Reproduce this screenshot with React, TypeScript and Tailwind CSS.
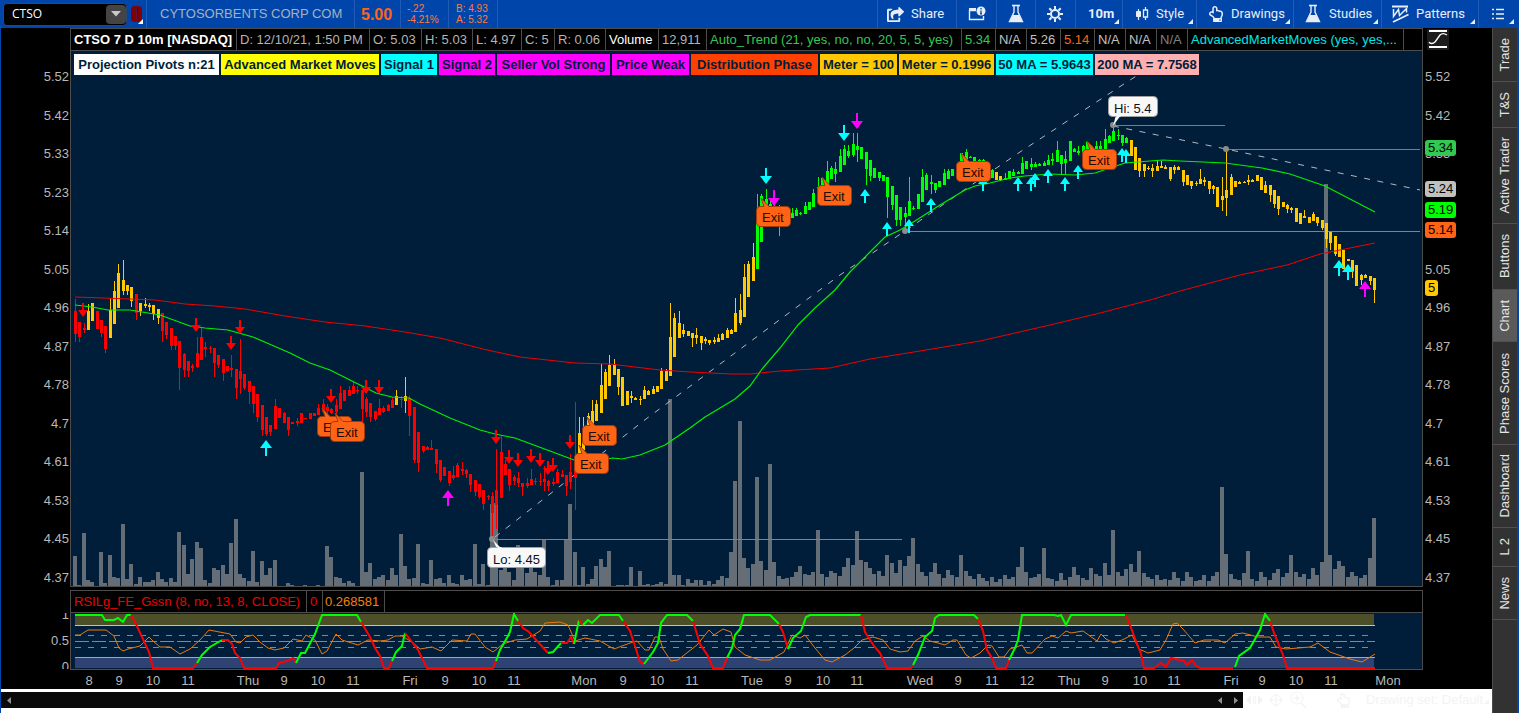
import React from "react";
import { FaRegHandPointUp, FaShareSquare } from "react-icons/fa";

const UP = "#00ff00";
const DOWN = "#ff0000";
const NEUTRAL = "#ffc800";
const CYAN = "#00ffff";
const MAGENTA = "#ff00ff";

const FIRST_X = 75;
const BAR_STEP = 4.344;
const VOLUME_BASE = 586;

// high, body top, body bottom, low
const CANDLES: number[][] = [
  [299, 311, 334, 342], [322, 322, 337, 342], [323, 328, 330, 333], [304, 311, 330, 330], [303, 303, 321, 321],
  [311, 311, 329, 329], [320, 320, 333, 337], [326, 326, 349, 353], [298, 310, 338, 338], [281, 291, 324, 324],
  [264, 273, 308, 308], [260, 280, 291, 295], [285, 285, 291, 295], [287, 287, 301, 307], [294, 294, 313, 320],
  [303, 303, 311, 316], [298, 304, 306, 308], [303, 305, 307, 311], [305, 305, 314, 320], [309, 309, 318, 324],
  [313, 313, 331, 342], [322, 322, 335, 339], [328, 328, 346, 350], [336, 336, 346, 350], [341, 341, 368, 390],
  [353, 354, 370, 377], [361, 361, 371, 377], [364, 366, 368, 372], [337, 353, 367, 368], [328, 337, 360, 360],
  [342, 347, 349, 357], [346, 348, 349, 353], [348, 348, 363, 377], [355, 355, 365, 368], [359, 359, 373, 381],
  [366, 366, 371, 372], [355, 368, 370, 377], [369, 369, 388, 399], [339, 371, 379, 394], [374, 374, 388, 390],
  [381, 381, 392, 404], [386, 386, 404, 413], [394, 394, 417, 422], [405, 405, 430, 436], [417, 417, 434, 436],
  [425, 425, 432, 436], [399, 406, 429, 429], [408, 408, 418, 418], [412, 413, 423, 423], [417, 417, 430, 436],
  [422, 422, 424, 424], [418, 421, 423, 426], [413, 413, 423, 423], [418, 418, 419, 419], [413, 413, 419, 419],
  [413, 413, 416, 416], [404, 408, 415, 415], [399, 404, 412, 412], [404, 407, 411, 415], [408, 409, 413, 414],
  [399, 405, 412, 415], [386, 393, 409, 409], [390, 390, 401, 401], [386, 390, 396, 396], [381, 386, 394, 394],
  [386, 390, 391, 394], [390, 390, 409, 422], [397, 399, 412, 417], [403, 403, 417, 422], [411, 411, 419, 421],
  [399, 408, 415, 415], [406, 408, 412, 413], [404, 405, 411, 411], [397, 400, 408, 408], [390, 396, 405, 405],
  [396, 399, 400, 408], [377, 396, 401, 413], [396, 398, 416, 436], [407, 407, 460, 463], [432, 432, 463, 472],
  [446, 446, 451, 453], [446, 447, 450, 450], [440, 448, 450, 450], [449, 449, 464, 473], [460, 460, 480, 482],
  [467, 467, 476, 476], [471, 471, 483, 486], [466, 475, 478, 480], [463, 465, 477, 477], [462, 469, 471, 475],
  [469, 470, 474, 478], [474, 474, 485, 492], [480, 480, 492, 496], [484, 484, 497, 499], [490, 490, 504, 510],
  [495, 496, 497, 500], [492, 496, 513, 537], [449, 490, 505, 529], [436, 452, 498, 498], [460, 464, 475, 475],
  [469, 469, 485, 491], [475, 477, 481, 485], [472, 478, 483, 487], [483, 483, 487, 496], [478, 483, 486, 488],
  [469, 479, 485, 485], [478, 481, 482, 485], [473, 481, 482, 486], [466, 479, 482, 491], [480, 481, 486, 491],
  [478, 482, 484, 486], [469, 472, 483, 483], [470, 474, 477, 477], [475, 475, 486, 496], [454, 472, 482, 489],
  [402, 466, 478, 510], [417, 433, 453, 455], [417, 440, 450, 453], [413, 416, 430, 430], [400, 411, 425, 425],
  [400, 404, 421, 421], [364, 385, 413, 413], [369, 372, 399, 399], [355, 365, 386, 386], [359, 364, 375, 375],
  [369, 369, 387, 395], [377, 377, 406, 406], [391, 391, 405, 405], [391, 396, 398, 403], [397, 398, 400, 400],
  [396, 399, 400, 405], [386, 390, 399, 399], [390, 391, 395, 395], [386, 389, 394, 394], [386, 386, 392, 392],
  [368, 371, 389, 389], [369, 371, 381, 381], [303, 337, 376, 376], [313, 318, 357, 357], [311, 323, 338, 338],
  [324, 330, 334, 337], [331, 331, 336, 336], [333, 333, 338, 347], [328, 335, 338, 344], [336, 336, 343, 350],
  [337, 339, 341, 344], [340, 340, 343, 345], [337, 340, 342, 344], [334, 338, 342, 342], [333, 334, 340, 340],
  [328, 330, 338, 338], [329, 330, 334, 334], [298, 313, 332, 332], [294, 310, 323, 325], [264, 277, 317, 317],
  [261, 264, 297, 297], [243, 257, 281, 281], [194, 210, 269, 269], [194, 196, 242, 242], [189, 199, 210, 210],
  [200, 204, 212, 212], [205, 208, 215, 215], [205, 212, 227, 236], [210, 212, 220, 220], [208, 211, 217, 217],
  [208, 213, 218, 218], [208, 210, 216, 216], [212, 213, 214, 215], [202, 206, 214, 214], [202, 202, 210, 210],
  [189, 193, 207, 207], [177, 187, 200, 200], [177, 178, 190, 190], [161, 171, 185, 185], [166, 168, 179, 179],
  [162, 169, 174, 182], [149, 156, 172, 172], [145, 149, 165, 165], [145, 151, 156, 158], [133, 144, 155, 157],
  [133, 146, 150, 162], [147, 147, 159, 159], [152, 152, 169, 185], [160, 160, 176, 181], [168, 168, 178, 178],
  [172, 172, 178, 181], [175, 175, 181, 181], [177, 177, 197, 218], [186, 186, 205, 210], [195, 195, 220, 226],
  [207, 207, 220, 226], [207, 213, 217, 229], [177, 201, 216, 216], [206, 208, 209, 210], [194, 194, 209, 209],
  [169, 177, 202, 202], [173, 175, 190, 190], [175, 182, 184, 194], [183, 183, 190, 193], [181, 181, 187, 187],
  [169, 173, 185, 185], [169, 171, 179, 179], [169, 169, 176, 176], [163, 165, 171, 171], [153, 153, 165, 165],
  [149, 152, 163, 163], [156, 157, 158, 158], [157, 157, 163, 163], [159, 160, 165, 165], [159, 160, 162, 168],
  [165, 165, 173, 175], [169, 170, 178, 178], [172, 172, 180, 180], [176, 176, 180, 181], [173, 178, 180, 180],
  [171, 171, 179, 179], [169, 172, 176, 176], [171, 172, 174, 174], [157, 163, 174, 174], [161, 161, 169, 169],
  [158, 164, 167, 170], [162, 164, 167, 167], [163, 164, 166, 166], [161, 163, 166, 166], [155, 160, 165, 165],
  [153, 159, 161, 165], [141, 150, 162, 162], [155, 155, 164, 174], [151, 159, 163, 174], [141, 141, 161, 161],
  [148, 149, 152, 152], [146, 151, 153, 155], [145, 146, 160, 160], [141, 142, 149, 149], [145, 146, 150, 150],
  [141, 146, 150, 150], [141, 146, 150, 150], [129, 139, 149, 149], [135, 136, 143, 143], [125, 131, 141, 141],
  [129, 135, 136, 140], [135, 135, 143, 146], [137, 138, 143, 143], [140, 140, 156, 156], [147, 147, 170, 170],
  [158, 158, 171, 177], [164, 164, 171, 177], [166, 168, 169, 170], [164, 168, 171, 177], [160, 166, 171, 171],
  [161, 166, 168, 168], [165, 167, 169, 169], [167, 167, 179, 181], [165, 167, 170, 174], [166, 167, 170, 170],
  [170, 170, 182, 186], [175, 175, 185, 185], [181, 181, 186, 189], [181, 183, 184, 186], [169, 179, 184, 184],
  [177, 180, 182, 186], [181, 181, 189, 194], [185, 186, 189, 194], [187, 187, 207, 207], [177, 196, 200, 211],
  [151, 190, 198, 216], [174, 177, 195, 195], [181, 181, 187, 187], [181, 182, 184, 184], [181, 182, 183, 183],
  [175, 180, 182, 185], [179, 180, 182, 182], [175, 175, 181, 181], [177, 177, 190, 190], [181, 185, 193, 193],
  [185, 185, 195, 202], [190, 190, 204, 208], [196, 196, 209, 215], [202, 202, 207, 207], [204, 205, 209, 213],
  [207, 208, 210, 213], [208, 208, 222, 222], [213, 213, 224, 224], [210, 216, 218, 218], [217, 217, 223, 223],
  [212, 214, 221, 221], [217, 217, 223, 226], [220, 220, 228, 230], [223, 223, 239, 248], [232, 232, 243, 250],
  [236, 236, 254, 256], [244, 244, 257, 257], [250, 250, 269, 269], [259, 259, 261, 261], [260, 260, 271, 278],
  [265, 265, 286, 286], [274, 275, 280, 285], [274, 275, 278, 278], [276, 276, 281, 285], [278, 278, 290, 303],
];

// last bar index of each colour run
const COLOR_RUNS: [number, string][] = [
  [2, DOWN], [4, NEUTRAL], [7, DOWN], [13, NEUTRAL], [14, DOWN], [19, NEUTRAL], [73, DOWN], [74, NEUTRAL],
  [75, DOWN], [76, NEUTRAL], [115, DOWN], [156, NEUTRAL], [211, UP], [213, NEUTRAL], [242, UP], [299, NEUTRAL],
];

const VOLUME = [
  30, 1, 53, 6, 4, 0, 34, 3, 31, 9, 8, 62, 7, 22, 2, 9, 4, 4, 6, 14, 7, 4, 8, 4, 54, 41, 12, 27, 44, 38,
  6, 3, 18, 16, 21, 12, 43, 67, 12, 8, 5, 35, 4, 25, 11, 18, 26, 0, 0, 3, 1, 0, 0, 1, 0, 0, 1, 0, 40, 29,
  9, 8, 3, 5, 3, 0, 114, 14, 23, 7, 9, 11, 6, 18, 11, 52, 20, 7, 8, 42, 3, 2, 26, 7, 8, 3, 11, 3, 2, 11,
  6, 7, 42, 2, 22, 1, 82, 83, 16, 18, 14, 6, 41, 33, 13, 26, 14, 11, 47, 9, 1, 6, 6, 46, 82, 34, 1, 19, 2, 7,
  20, 27, 19, 35, 0, 1, 1, 1, 19, 0, 15, 1, 2, 1, 2, 4, 2, 187, 11, 11, 1, 7, 3, 6, 6, 1, 5, 2, 6, 10,
  8, 34, 105, 165, 28, 18, 22, 109, 25, 16, 122, 24, 10, 7, 8, 9, 14, 20, 12, 11, 14, 56, 12, 9, 15, 13, 10, 19, 28, 21,
  55, 26, 24, 18, 12, 15, 10, 31, 23, 13, 26, 20, 30, 48, 22, 14, 10, 14, 23, 12, 8, 16, 11, 9, 31, 15, 10, 7, 12, 8,
  5, 9, 4, 7, 11, 7, 9, 19, 39, 14, 8, 9, 12, 38, 8, 7, 5, 13, 6, 9, 19, 11, 8, 6, 18, 12, 10, 23, 11, 56,
  14, 10, 17, 22, 14, 35, 13, 9, 7, 11, 6, 7, 6, 14, 8, 5, 14, 9, 5, 6, 11, 5, 10, 14, 99, 32, 12, 7, 6, 13,
  35, 7, 5, 14, 9, 6, 13, 17, 9, 13, 31, 14, 9, 12, 7, 18, 11, 24, 402, 31, 17, 25, 20, 9, 14, 10, 8, 11, 28, 68,
];

const MA_200 =
  "75,297 130,299 155,300 185,304 215,306 245,309 285,316 325,322 365,326 405,332 440,338 487,350 520,357 575,363 610,364 660,370 690,372 732,374 750,374 780,371 830,368 870,359 920,351 980,341 1050,325 1100,313 1150,300 1180,291 1240,275 1287,265 1320,254 1345,249 1375,243";
const MA_50 =
  "75,305 92,307 108,310 130,310 160,315 190,326 205,328 228,330 253,337 290,353 310,363 330,370 350,380 376,393 392,397 409,398 420,404 450,418 480,430 495,434 515,438 550,451 574,460 600,460 613,458 622,459 640,455 665,445 690,428 705,417 735,399 750,386 762,369 780,348 798,325 815,308 835,290 850,272 870,252 885,237 900,230 915,221 940,205 965,190 975,186 990,183 1010,178 1025,176 1050,174 1075,175 1095,173 1110,168 1125,163 1150,161 1163,160 1180,161 1225,163 1262,168 1290,174 1325,186 1350,199 1375,212";

// x, tip y, colour, half width, height (negative height points down)
const ARROWS: [number, number, string, number, number][] = [
  [83, 317, DOWN, 4, -14], [196, 332, DOWN, 4, -14], [240, 334, DOWN, 4, -14], [231, 350, DOWN, 4, -14],
  [331, 403, DOWN, 4, -14], [366, 394, DOWN, 4, -14], [379, 394, DOWN, 4, -14], [496, 444, DOWN, 4, -14],
  [509, 464, DOWN, 4, -14], [518, 467, DOWN, 4, -14], [531, 463, DOWN, 4, -14], [540, 467, DOWN, 4, -14],
  [548, 475, DOWN, 4, -14], [553, 472, DOWN, 4, -14], [570, 449, DOWN, 4, -14],
  [266, 440, CYAN, 5, 16], [448, 490, MAGENTA, 5, 16], [766, 184, CYAN, 5, -16], [844, 141, CYAN, 5, -16],
  [774, 206, MAGENTA, 5, -16], [857, 129, MAGENTA, 5, -16], [865, 189, CYAN, 4, 14], [887, 222, CYAN, 4, 14],
  [909, 219, CYAN, 4, 14], [931, 198, CYAN, 4, 14], [983, 177, CYAN, 4, 14], [1018, 177, CYAN, 4, 14],
  [1031, 177, CYAN, 4, 14], [1035, 173, CYAN, 4, 14], [1048, 169, CYAN, 4, 14], [1065, 177, CYAN, 4, 14],
  [1078, 165, CYAN, 4, 14], [1122, 148, CYAN, 4, 14], [1126, 149, CYAN, 4, 14], [1339, 260, CYAN, 5, 16],
  [1348, 264, CYAN, 5, 16], [1365, 281, MAGENTA, 5, 16],
];

const EXITS: [number, number][] = [
  [317, 416], [330, 421], [582, 425], [574, 453], [756, 206], [817, 185], [956, 161], [1082, 149],
];

const RSI_SEGMENTS: [string, string][] = [
  [UP, "75,615 102,615 105,620 114,620 118,618 123,622 127,615 131,615"],
  [DOWN, "131,615 136,624 149,652 153,668 193,668 197,663"],
  [UP, "197,663 202,655 210,647 222,640"],
  [DOWN, "222,640 228,640 232,644 235,653 240,658 244,668 276,668 279,663 287,661 293,658 296,663"],
  [UP, "296,663 301,653 305,653 315,634 322,615 357,615 361,622"],
  [DOWN, "361,622 370,637 375,648 380,656 384,668 389,668 392,661"],
  [UP, "392,661 396,652 402,646 405,633"],
  [DOWN, "405,633 409,638 418,650 427,668 493,668 496,661"],
  [UP, "496,661 500,650 508,636 510,632 514,614 518,621"],
  [DOWN, "518,621 523,628 529,632 548,653"],
  [UP, "548,653 553,652 561,643"],
  [DOWN, "561,643 567,643 571,637 574,644"],
  [UP, "574,644 579,620"],
  [DOWN, "579,620 583,625"],
  [UP, "583,625 588,620 592,623 600,615 619,615 623,621"],
  [DOWN, "623,621 630,631 635,646 640,662 644,664"],
  [UP, "644,664 653,652 658,643 661,623 667,615 687,615 693,621"],
  [DOWN, "693,621 700,644 708,656 713,668 723,668 727,658"],
  [UP, "727,658 732,648 735,635 740,629 744,615 770,615 779,624"],
  [DOWN, "779,624 783,632 788,649"],
  [UP, "788,649 793,638 801,631 806,617 810,615 861,615"],
  [DOWN, "861,615 865,632 874,646 880,653 887,668 911,668 913,665"],
  [UP, "913,665 918,655 925,637 932,631 935,618 939,615 974,615 978,619"],
  [DOWN, "978,619 983,631 987,650 992,658 996,668 1006,668 1009,660"],
  [UP, "1009,660 1015,648 1018,640 1022,615 1054,615 1058,616 1061,615 1066,625 1071,615 1125,615"],
  [DOWN, "1126,615 1130,625 1136,641 1141,654 1144,668 1154,668 1161,663 1166,667 1171,658 1184,661 1187,665 1192,660 1196,666 1200,668 1233,668"],
  [UP, "1235,667 1239,656 1250,648 1260,630 1265,614 1270,621"],
  [DOWN, "1270,621 1274,633 1283,655 1287,668 1375,668"],
];

const RSI_SIGNAL =
  "75,635 80,635 88,630 106,630 114,636 119,648 123,651 128,649 140,646 149,637 153,641 160,647 170,647 180,654 190,649 200,640 209,630 230,634 236,642 240,643 246,637 253,635 260,642 268,648 275,650 284,648 293,639 302,641 306,635 315,640 322,654 327,651 336,634 342,640 358,645 368,640 380,641 388,640 395,636 402,636 412,642 420,649 432,647 441,651 452,640 467,641 471,634 475,634 485,647 493,652 503,644 515,640 527,639 540,631 545,623 560,622 568,625 575,641 585,638 600,641 614,649 630,643 637,641 645,650 649,650 655,637 659,637 663,649 671,661 678,660 688,652 697,645 709,630 714,635 723,629 731,632 735,647 745,655 760,660 770,660 784,652 792,635 800,638 805,635 815,648 825,660 832,662 845,655 854,648 862,640 873,637 883,640 890,649 900,652 908,651 915,641 923,636 930,641 938,643 945,645 953,640 957,640 966,655 971,658 980,653 988,645 992,646 999,657 1004,657 1010,649 1022,645 1027,653 1032,653 1045,639 1052,636 1058,638 1066,631 1071,633 1083,631 1097,641 1101,634 1106,639 1114,643 1122,640 1132,635 1139,649 1148,653 1160,650 1166,640 1173,624 1177,623 1183,629 1195,643 1204,640 1218,640 1225,643 1235,634 1243,633 1258,637 1270,637 1276,647 1286,649 1310,647 1318,643 1330,652 1350,659 1362,662 1375,654";

const TIME_TICKS: [number, string][] = [
  [89, "8"], [119, "9"], [153, "10"], [188, "11"], [248, "Thu"], [284, "9"], [318, "10"], [353, "11"],
  [410, "Fri"], [445, "9"], [479, "10"], [514, "11"], [584, "Mon"], [623, "9"], [657, "10"], [692, "11"],
  [752, "Tue"], [788, "9"], [823, "10"], [857, "11"], [920, "Wed"], [958, "9"], [992, "11"], [1027, "12"],
  [1069, "Thu"], [1105, "9"], [1140, "10"], [1174, "11"], [1231, "Fri"], [1262, "9"], [1296, "10"],
  [1331, "11"], [1388, "Mon"],
];

const PRICE_TICKS = [
  "5.52", "5.42", "5.33", "5.23", "5.14", "5.05", "4.96", "4.87", "4.78", "4.7", "4.61", "4.53", "4.45", "4.37",
];

// ticks that a price tag covers on the right axis
const COVERED_TICKS = ["5.23", "5.14"];

const PRICE_TAGS = [
  { value: "5.34", className: "top-[112px] bg-[#33c853]" },
  { value: "5.24", className: "top-[153px] bg-[#c0c0c0]" },
  { value: "5.19", className: "top-[174px] bg-[#00ff00]" },
  { value: "5.14", className: "top-[194px] bg-[#ff6416]" },
  { value: "5", className: "top-[252px] bg-[#ffc800]" },
];

const HEADER_CELLS = [
  { text: "CTSO 7 D 10m [NASDAQ]", className: "w-[166px] font-bold text-white" },
  { text: "D: 12/10/21, 1:50 PM", className: "w-[133px] text-[#b4b4b4]" },
  { text: "O: 5.03", className: "w-[52px] text-[#b4b4b4]" },
  { text: "H: 5.03", className: "w-[51px] text-[#b4b4b4]" },
  { text: "L: 4.97", className: "w-[49px] text-[#b4b4b4]" },
  { text: "C: 5", className: "w-[33px] text-[#b4b4b4]" },
  { text: "R: 0.06", className: "w-[51px] text-[#b4b4b4]" },
  { text: "Volume", className: "w-[53px] text-white" },
  { text: "12,911", className: "w-[48px] text-[#b4b4b4]" },
  { text: "Auto_Trend (21, yes, no, no, 20, 5, 5, yes)", className: "w-[255px] text-[#33c853]" },
  { text: "5.34", className: "w-[34px] text-[#33c853]" },
  { text: "N/A", className: "w-[31px] text-[#c0c0c0]" },
  { text: "5.26", className: "w-[34px] text-[#c0c0c0]" },
  { text: "5.14", className: "w-[34px] text-[#ff6416]" },
  { text: "N/A", className: "w-[31px] text-[#c0c0c0]" },
  { text: "N/A", className: "w-[31px] text-[#c0c0c0]" },
  { text: "N/A", className: "w-[31px] text-[#808080]" },
  { text: "AdvancedMarketMoves (yes, yes,...", className: "w-[216px] text-[#00e5e5]" },
];

const LABELS = [
  { text: "Projection Pivots n:21", className: "w-[145px] bg-white" },
  { text: "Advanced Market Moves", className: "w-[158px] bg-[#ffff00]" },
  { text: "Signal 1", className: "w-[56px] bg-[#00ffff]" },
  { text: "Signal 2", className: "w-[56px] bg-[#ff00ff]" },
  { text: "Seller Vol Strong", className: "w-[113px] bg-[#ff00ff]" },
  { text: "Price Weak", className: "w-[77px] bg-[#ff00ff]" },
  { text: "Distribution Phase", className: "w-[127px] bg-[#ff4000]" },
  { text: "Meter = 100", className: "w-[77px] bg-[#ffc800]" },
  { text: "Meter = 0.1996", className: "w-[95px] bg-[#ffc800]" },
  { text: "50 MA = 5.9643", className: "w-[97px] bg-[#00ffff]" },
  { text: "200 MA = 7.7568", className: "w-[104px] bg-[#ffafaf]" },
];

const SIDE_TABS = [
  { text: "Trade", className: "h-[54px]" },
  { text: "T&S", className: "h-[46px]" },
  { text: "Active Trader", className: "h-[96px]" },
  { text: "Buttons", className: "h-[66px]" },
  { text: "Chart", className: "h-[52px] bg-[#5a5a5a]" },
  { text: "Phase Scores", className: "h-[103px]" },
  { text: "Dashboard", className: "h-[83px]" },
  { text: "L 2", className: "h-[39px]" },
  { text: "News", className: "h-[53px]" },
];

const barX = (index: number) => Math.round(FIRST_X + index * BAR_STEP);

const barColor = (index: number) => {
  const run = COLOR_RUNS.find(([last]) => index <= last);
  return run ? run[1] : NEUTRAL;
};

const Arrow = ({ x, y, color, half, height }: { x: number; y: number; color: string; half: number; height: number }) => {
  const dir = height > 0 ? 1 : -1;
  const neck = y + dir * (half + 3);
  return (
    <path
      fill={color}
      d={`M${x} ${y}L${x + half + 1} ${neck}H${x + 1}V${y + height}H${x - 1}V${neck}H${x - half - 1}Z`}
    />
  );
};

const ExitBubble = ({ x, y }: { x: number; y: number }) => (
  <g>
    <path
      d={`M${x + 5} ${y - 8}L${x + 8} ${y + 0.5}H${x + 5}Q${x + 0.5} ${y + 0.5} ${x + 0.5} ${y + 5}V${y + 16}Q${x + 0.5} ${y + 20.5} ${x + 5} ${y + 20.5}H${x + 30}Q${x + 34.5} ${y + 20.5} ${x + 34.5} ${y + 16}V${y + 5}Q${x + 34.5} ${y + 0.5} ${x + 30} ${y + 0.5}H${x + 13}Z`}
      fill="#ff6416"
      stroke="#a03c0c"
    />
    <text x={x + 6} y={y + 16} fontSize="13" fill="#200c00">
      Exit
    </text>
  </g>
);

const PriceChart = () => (
  <svg viewBox="71 51 1351 535" className="block h-auto w-full bg-[#001e3a]" role="img" aria-label="CTSO price chart">
    <g fill="#656e77" shapeRendering="crispEdges">
      {VOLUME.map((v, i) => (
        <rect key={i} x={barX(i) - 2} y={VOLUME_BASE - v} width="4" height={v} />
      ))}
    </g>
    <g shapeRendering="crispEdges" fill="none">
      <path d="M495 539.5H902M907 231.5H1420" stroke="#d8692c" />
      <path d="M1115 125.5H1225M1228 149.5H1420" stroke="#33a858" />
    </g>
    <g fill="none" stroke="#b4b8bc" strokeDasharray="6 7.5">
      <polyline points="495,537 646,419 840,275 905,231 967,188 1020,152 1127,82 1172,53" />
      <polyline points="1113,126 1226,149 1420,190" />
    </g>
    <g shapeRendering="crispEdges">
      {CANDLES.map(([high, top, bottom, low], i) => (
        <g key={i} fill={barColor(i)}>
          <rect x={barX(i)} y={high} width="1" height={low - high} />
          <rect x={barX(i) - 1} y={top} width="3" height={Math.max(bottom - top, 1)} />
        </g>
      ))}
    </g>
    <polyline points={MA_200} fill="none" stroke="#f00000" />
    <polyline points={MA_50} fill="none" stroke="#00f000" strokeWidth="1.2" />
    <g fill="#8c8c8c">
      <circle cx="1113" cy="125" r="3" />
      <circle cx="1226" cy="149" r="3" />
      <circle cx="905" cy="231" r="3" />
      <circle cx="492" cy="539" r="3" />
    </g>
    {ARROWS.map(([x, y, color, half, height], i) => (
      <Arrow key={i} x={x} y={y} color={color} half={half} height={height} />
    ))}
    {EXITS.map(([x, y]) => (
      <ExitBubble key={x} x={x} y={y} />
    ))}
    <g fill="#f8f8f8" stroke="#a0a0a0">
      <path stroke="none" d="M1113 126L1116 115H1121Z M493 540L497 549H502Z" />
      <rect x="1108.5" y="96.5" width="49" height="20" rx="4" />
      <rect x="487.5" y="547.5" width="58" height="20" rx="4" />
      <path d="M1116.5 116.5H1120.5M497.5 547.5H501.5" stroke="#f8f8f8" />
    </g>
    <g fontSize="13" fill="#101020">
      <text x="1114" y="113">Hi: 5.4</text>
      <text x="493" y="564">Lo: 4.45</text>
    </g>
  </svg>
);

const RsiChart = () => (
  <svg viewBox="71 613 1351 56" className="block h-auto w-full bg-[#001e3a]" role="img" aria-label="RSI study">
    <g shapeRendering="crispEdges">
      <rect x="75" y="614" width="1299" height="11" fill="#4d4f28" />
      <rect x="75" y="658" width="1299" height="10" fill="#2e4274" />
      <path d="M75 625.5H1375" stroke="#ffc800" />
      <path d="M75 657.5H1375" stroke="#9c9cff" />
      <path d="M75 635.5H1375M75 647.5H1375" stroke="#808890" strokeDasharray="6 7" />
      <path d="M75 641.5H1375" stroke="#808890" strokeDasharray="14 3" />
    </g>
    <polyline points={RSI_SIGNAL} fill="none" stroke="#e87a10" />
    {RSI_SEGMENTS.map(([color, points], i) => (
      <polyline key={i} points={points} fill="none" stroke={color} strokeWidth="2" />
    ))}
  </svg>
);

const TimeAxis = () => (
  <svg viewBox="71 670 1351 19" className="block h-auto w-full" role="img" aria-label="Time axis">
    <g fontSize="13" fill="#b8b8b8" textAnchor="middle">
      {TIME_TICKS.map(([x, label]) => (
        <text key={x} x={x} y="685">
          {label}
        </text>
      ))}
    </g>
  </svg>
);

const Flask = () => (
  <svg viewBox="0 0 18 20" className="h-5 w-[18px]" fill="none" stroke="currentColor">
    <path d="M5 1.5h8" strokeWidth="1.6" />
    <path d="M7 2v6L2.5 17.5h13L11 8V2" strokeWidth="1.4" />
    <path d="M6 11h6l3.5 7h-13z" fill="currentColor" stroke="none" />
  </svg>
);

const Gear = () => (
  <svg viewBox="0 0 18 18" className="size-[18px]" stroke="currentColor" fill="none">
    <circle cx="9" cy="9" r="4" strokeWidth="2" />
    <path
      d="M9 1v3M9 14v3M1 9h3M14 9h3M3.3 3.3l2.2 2.2M12.5 12.5l2.2 2.2M3.3 14.7l2.2-2.2M12.5 5.5l2.2-2.2"
      strokeWidth="2"
    />
  </svg>
);

const WindowInfo = () => (
  <svg viewBox="0 0 18 16" className="h-4 w-[18px]" fill="none" stroke="currentColor">
    <path d="M8 4.5H1.5V13.5h14V10" strokeWidth="1.4" />
    <path d="M1 2h7v2H1z" fill="currentColor" stroke="none" />
    <circle cx="13" cy="5" r="4.5" fill="currentColor" stroke="none" />
    <path d="M13 4.5v3.5M13 2v1.4M12 7.8h2" stroke="#0045a9" strokeWidth="1.3" />
  </svg>
);

const CandlesIcon = () => (
  <svg viewBox="0 0 14 14" className="size-[14px]" fill="none" stroke="currentColor">
    <path d="M3.5 2v11" strokeWidth="1.2" />
    <path d="M1.5 4.5h4v5h-4z" fill="currentColor" />
    <path d="M10.5 0v3M10.5 10v3" strokeWidth="1.2" />
    <path d="M8.5 3h4v7h-4z" strokeWidth="1.3" />
  </svg>
);

const PatternsIcon = () => (
  <svg viewBox="0 0 17 18" className="h-[18px] w-[17px]" fill="none" stroke="currentColor">
    <path d="M0 1.5h16M1 17L16.5 9.5" strokeWidth="1.8" />
    <path d="M1.5 4v7.5L6.5 4.5 7.5 10.5 14.5 3.5v4" strokeWidth="1.5" />
  </svg>
);

const ListIcon = () => (
  <svg viewBox="0 0 12 12" className="size-3" stroke="currentColor" strokeWidth="1.6">
    <path d="M0 1.5h2M4 1.5h8M0 6h2M4 6h8M0 10.5h2M4 10.5h8" />
  </svg>
);

const Corner = () => (
  <svg viewBox="0 0 5 5" className="absolute right-[3px] bottom-1 size-[5px]" fill="currentColor">
    <path d="M5 0v5H0z" />
  </svg>
);

interface ToolButtonProps {
  className: string;
  label?: string;
  icon?: React.ReactNode;
  text?: string;
  menu?: boolean;
}

const ToolButton: React.FC<ToolButtonProps> = ({ className, label, icon, text, menu }) => (
  <button
    type="button"
    aria-label={label}
    className={`relative flex h-full shrink-0 items-center gap-[7px] border-l border-[#1f5cb8] text-[#e8eef8] ${className}`}
  >
    {icon}
    {text}
    {menu && <Corner />}
  </button>
);

const TopBar = () => (
  <header className="flex h-7 items-center bg-[#0045a9] pr-[2px] font-['Roboto',sans-serif] text-[13px]">
    <div className="ml-[3px] flex h-[23px] w-[124px] shrink-0 items-center rounded-sm border border-[#30466a] bg-black">
      <input
        aria-label="Symbol"
        defaultValue="CTSO"
        className="w-0 flex-1 bg-transparent pl-2 font-['Open_Sans',sans-serif] text-[12px] text-white outline-none"
      />
      <button type="button" aria-label="Recent symbols" className="flex h-[19px] w-5 items-center justify-center rounded-sm bg-[#444]">
        <svg viewBox="0 0 10 6" className="h-[6px] w-[10px]" fill="#c8c8c8">
          <path d="M0 0h10L5 5.5z" />
        </svg>
      </button>
    </div>
    <button type="button" className="relative ml-1 flex h-full w-[15px] shrink-0 items-center text-white">
      <span className="flex h-4 w-[11px] items-center justify-center rounded-sm bg-[#820000] text-[14px] text-[#3a1a4a]">1</span>
      <Corner />
    </button>
    <h1 className="flex h-full w-[208px] shrink-0 items-center border-l border-[#1f5cb8] pl-[13px] font-['Liberation_Sans',sans-serif] text-[13px] whitespace-nowrap text-[#a8b0bc]">
      CYTOSORBENTS CORP COM
    </h1>
    <div className="flex h-full w-[46px] shrink-0 items-center border-l border-[#1f5cb8] pl-[6px] pt-[2px] font-['Liberation_Sans',sans-serif] text-[16px] font-bold text-[#ff6416]">
      5.00
    </div>
    <div className="flex h-full w-12 shrink-0 flex-col justify-center border-l border-[#1f5cb8] pl-[6px] font-['Liberation_Sans',sans-serif] text-[10px] leading-[11px] text-[#ff7a3c]">
      <span>-.22</span>
      <span>-4.21%</span>
    </div>
    <div className="flex h-full w-[50px] shrink-0 flex-col justify-center border-x border-[#1f5cb8] pl-[7px] font-['Liberation_Sans',sans-serif] text-[10px] leading-[11px] text-[#ff7a3c]">
      <span>B: 4.93</span>
      <span>A: 5.32</span>
    </div>
    <div className="flex-1" />
    <nav className="flex h-full">
      <ToolButton className="w-[79px] pl-[9px]" icon={<FaShareSquare size={17} />} text="Share" />
      <ToolButton className="w-10 pl-[11px]" label="Detach window" icon={<WindowInfo />} />
      <ToolButton className="w-[39px] pl-[10px]" label="Edit studies" icon={<Flask />} />
      <ToolButton className="w-10 pl-[10px]" label="Settings" icon={<Gear />} />
      <ToolButton className="w-[47px] pl-3 font-bold" text="10m" menu />
      <ToolButton className="w-[74px] pl-3" icon={<CandlesIcon />} text="Style" menu />
      <ToolButton className="w-[97px] pl-[11px]" icon={<FaRegHandPointUp size={16} />} text="Drawings" menu />
      <ToolButton className="w-[88px] pl-[10px]" icon={<Flask />} text="Studies" menu />
      <ToolButton className="w-[97px] pl-[10px]" icon={<PatternsIcon />} text="Patterns" menu />
      <ToolButton className="w-[39px] pl-[13px]" label="Chart menu" icon={<ListIcon />} menu />
    </nav>
  </header>
);

const ChartHeader = () => (
  <div className="flex h-[23px] items-stretch overflow-hidden border-y border-[#4c4c4c] bg-black">
    {HEADER_CELLS.map((cell, i) => (
      <div
        key={i}
        className={`flex shrink-0 items-center overflow-hidden border-r border-[#4c4c4c] pl-[3px] whitespace-nowrap ${cell.className}`}
      >
        {cell.text}
      </div>
    ))}
  </div>
);

const StudyLabels = () => (
  <div className="absolute top-[3px] left-[3px] flex gap-[2px] font-bold text-[#001e3a]">
    {LABELS.map((label) => (
      <div key={label.text} className={`flex h-[21px] items-center justify-center whitespace-nowrap ${label.className}`}>
        {label.text}
      </div>
    ))}
  </div>
);

const ScrollBar = () => (
  <footer className="flex h-[24px] items-center bg-white pt-[3px] pb-[5px]">
    <div className="flex h-4 flex-1 items-center bg-[#0a0a0a] text-[#909090]">
      <button type="button" aria-label="Scroll left" className="pl-[6px]">
        <svg viewBox="0 0 4 7" className="h-[7px] w-1" fill="currentColor"><path d="M4 0v7L0 3.5z" /></svg>
      </button>
      <div className="flex-1" />
      <button type="button" aria-label="Step left" className="pr-3">
        <svg viewBox="0 0 4 7" className="h-[7px] w-1" fill="currentColor"><path d="M4 0v7L0 3.5z" /></svg>
      </button>
      <button type="button" aria-label="Step right" className="pr-[5px]">
        <svg viewBox="0 0 4 7" className="h-[7px] w-1" fill="currentColor"><path d="M0 0v7l4-3.5z" /></svg>
      </button>
    </div>
    <div className="flex w-[249px] items-center pl-[3px] text-[#f3f3f3]">
      <button type="button" aria-label="Pan">
        <svg viewBox="0 0 17 14" className="h-[14px] w-[17px]" fill="currentColor"><path d="M0 7l5-5v10zM17 7l-5-5v10zM7 3h1v8H7zM9 3h1v8H9z" /></svg>
      </button>
      <button type="button" aria-label="Crosshair" className="ml-[6px]">
        <svg viewBox="0 0 14 14" className="size-[14px]" fill="none" stroke="currentColor"><circle cx="7" cy="7" r="5" /><path d="M7 0v14M0 7h14" /></svg>
      </button>
      <button type="button" aria-label="Zoom in" className="ml-[6px]">
        <svg viewBox="0 0 18 18" className="size-[18px]" fill="none" stroke="currentColor"><circle cx="8" cy="7" r="6" /><path d="M8 4v6M5 7h6M12 12l5 5" strokeWidth="1.5" /></svg>
      </button>
      <button type="button" aria-label="Pointer" className="ml-[29px]"><FaRegHandPointUp size={15} /></button>
      <button type="button" className="relative ml-[15px] pr-[9px] whitespace-nowrap">
        Drawing set: Default
        <Corner />
      </button>
    </div>
  </footer>
);

export default function App() {
  return (
    <div className="flex min-h-screen flex-col bg-[#0045a9] font-['Liberation_Sans',Arial,sans-serif] text-[13px] leading-4">
      <TopBar />
      <div className="flex flex-1 pr-[2px] pb-px pl-px">
        <main className="flex min-w-0 flex-1 flex-col bg-black">
          <section className="grid grid-cols-[69px_minmax(0,1fr)_69px]">
            <div className="flex flex-col justify-between pt-[41px] pr-px pb-px text-right text-[#b8b8b8]">
              {PRICE_TICKS.map((tick) => (
                <span key={tick}>{tick}</span>
              ))}
            </div>
            <div className="border-x border-b border-[#4c4c4c]">
              <ChartHeader />
              <div className="relative">
                <PriceChart />
                <StudyLabels />
              </div>
            </div>
            <div className="relative flex flex-col justify-between pt-[41px] pb-px pl-[2px] text-[#b8b8b8]">
              {PRICE_TICKS.map((tick) => (
                <span key={tick} className={COVERED_TICKS.includes(tick) ? "invisible" : ""}>
                  {tick}
                </span>
              ))}
              {PRICE_TAGS.map((tag) => (
                <span key={tag.value} className={`absolute left-[2px] rounded-[3px] px-[3px] text-black ${tag.className}`}>
                  {tag.value}
                </span>
              ))}
              <button type="button" aria-label="Scale" className="absolute top-px left-1 bg-[#1c1c1c]">
                <svg viewBox="0 0 22 21" className="h-[21px] w-[22px]" fill="none" stroke="white">
                  <path d="M2 2h18M2 18h18" strokeWidth="2" />
                  <path d="M2 13c1 2 4 2 6 0l5-7c2-2 4-2 7 0" strokeWidth="1.3" />
                </svg>
              </button>
            </div>
          </section>

          <section className="mt-[3px] grid grid-cols-[69px_minmax(0,1fr)_69px]">
            <div className="flex flex-col pt-[23px] pr-px pb-px text-right leading-1 text-[#b8b8b8]">
              <div className="flex flex-1 flex-col justify-between overflow-hidden">
                <span>1</span>
                <span>0.5</span>
                <span>0</span>
              </div>
            </div>
            <div className="border-x border-b border-[#4c4c4c]">
              <div className="flex h-[23px] items-stretch border-y border-[#4c4c4c]">
                <div className="flex w-[236px] items-center border-r border-[#4c4c4c] pl-[3px] text-[#f00000]">
                  RSILg_FE_Gssn (8, no, 13, 8, CLOSE)
                </div>
                <div className="flex w-4 items-center border-r border-[#4c4c4c] pl-[3px] text-[#f00000]">0</div>
                <div className="flex w-[62px] items-center border-r border-[#4c4c4c] pl-[2px] text-[#f08010]">0.268581</div>
              </div>
              <RsiChart />
            </div>
          </section>

          <div className="px-[70px]">
            <TimeAxis />
          </div>
          <ScrollBar />
        </main>
        <aside className="flex w-[25px] flex-col border-l border-[#4c4c4c] bg-[#323232]">
          {SIDE_TABS.map((tab) => (
            <button
              key={tab.text}
              type="button"
              className={`flex items-center justify-center border-b border-[#505050] text-[#e4e4e4] ${tab.className}`}
            >
              <span className="rotate-180 whitespace-nowrap [writing-mode:vertical-rl]">{tab.text}</span>
            </button>
          ))}
        </aside>
      </div>
    </div>
  );
}
